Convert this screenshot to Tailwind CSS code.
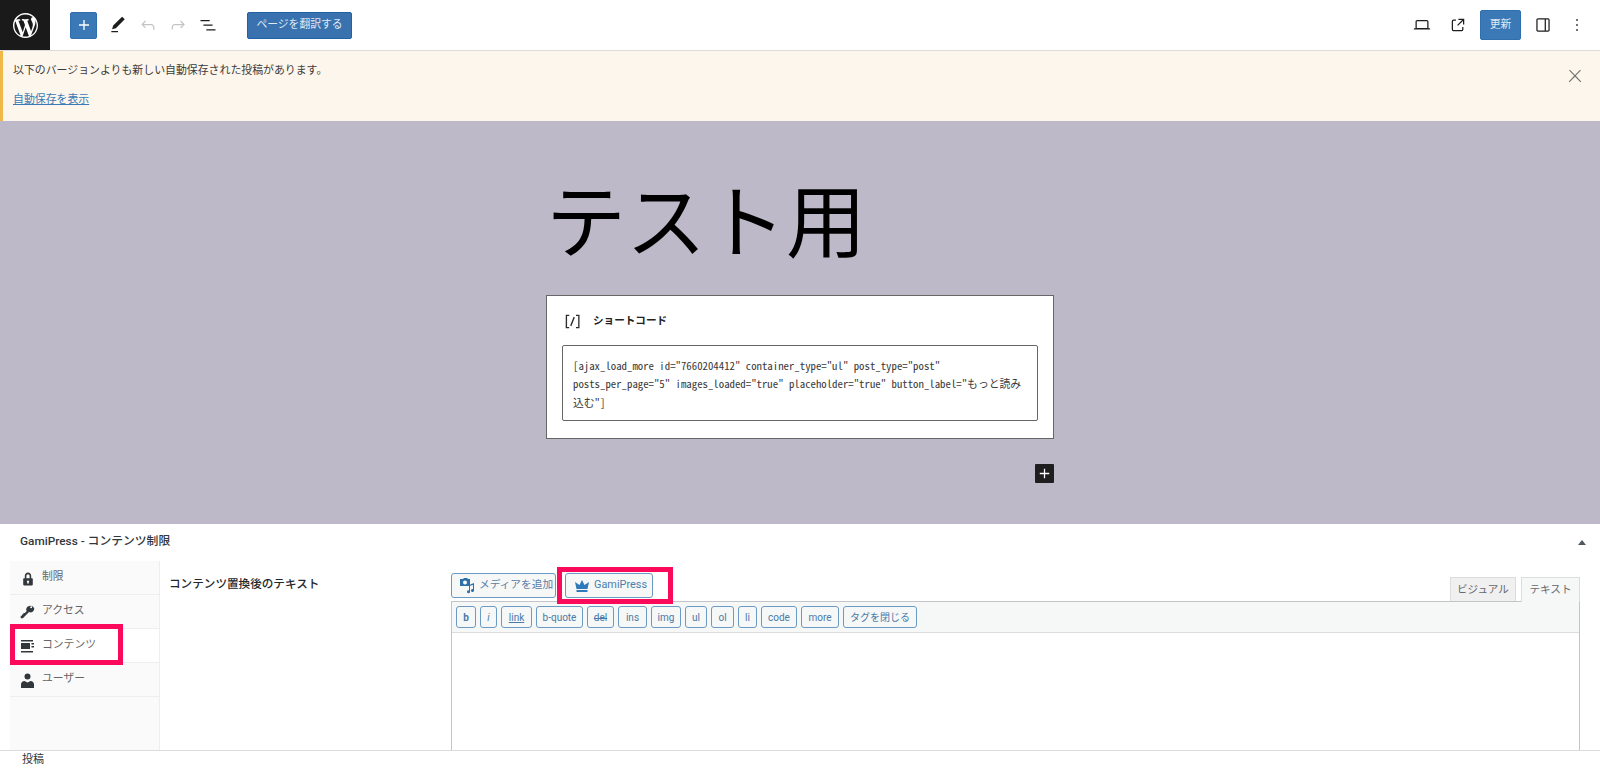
<!DOCTYPE html>
<html lang="ja">
<head>
    <meta charset="UTF-8">
    <title>テスト用</title>
    <script src="https://cdn.jsdelivr.net/npm/@tailwindcss/browser@4"></script>
</head>
<body class="bg-white">
<div class="relative w-[1600px] h-[771px] overflow-hidden flex flex-col font-['Roboto','Noto_Sans_CJK_JP',sans-serif] text-[#1e1e1e]">

    <!-- top bar -->
    <header class="h-[51px] shrink-0 flex items-center border-b border-[#dcdcdc] bg-white">
        <div class="w-[50px] h-[50px] bg-[#1a1a1a] flex items-center justify-center">
            <svg class="w-[25px] h-[25px] fill-white" viewBox="0 0 20 20"><path d="M20 10c0-5.51-4.49-10-10-10C4.48 0 0 4.49 0 10c0 5.52 4.48 10 10 10 5.51 0 10-4.48 10-10zM7.78 15.37L4.37 6.22c.55-.02 1.17-.08 1.17-.08.5-.06.44-1.13-.06-1.11 0 0-1.45.11-2.37.11-.18 0-.37 0-.58-.01C4.12 2.69 6.87 1.11 10 1.11c2.33 0 4.45.87 6.05 2.34-.68-.11-1.65.39-1.65 1.58 0 .74.45 1.36.9 2.1.35.61.55 1.36.55 2.46 0 1.49-1.4 5-1.4 5l-3.03-8.37c.54-.02.82-.17.82-.17.5-.05.44-1.25-.06-1.22 0 0-1.44.12-2.38.12-.87 0-2.33-.12-2.33-.12-.5-.03-.56 1.2-.06 1.22l.92.08 1.26 3.41zM17.41 10c.24-.64.74-1.87.43-4.25.7 1.29 1.05 2.71 1.05 4.25 0 3.29-1.73 6.24-4.4 7.78.97-2.59 1.94-5.2 2.92-7.78zM6.1 18.09C3.12 16.65 1.11 13.53 1.11 10c0-1.3.23-2.48.72-3.59C3.25 10.3 4.67 14.2 6.1 18.09zm4.03-6.63l2.58 6.98c-.86.29-1.76.45-2.71.45-.79 0-1.57-.11-2.29-.33.81-2.38 1.62-4.74 2.42-7.1z"/></svg>
        </div>
        <button class="ml-[20px] w-[27px] h-[27px] rounded-[2px] bg-[#3a78b6] border border-[#2f6fb0] flex items-center justify-center">
            <svg class="w-[20px] h-[20px] fill-white" viewBox="0 0 24 24"><path d="M18 11.2h-5.2V6h-1.6v5.2H6v1.6h5.2V18h1.6v-5.2H18z"/></svg>
        </button>
        <svg class="ml-[11px] w-[20px] h-[20px] fill-[#1e1e1e]" viewBox="0 0 24 24"><path d="M20.1 5.1L16.9 2 6.2 12.7l-1.3 4.4 4.5-1.3L20.1 5.1zM4 20.8h8v-1.5H4v1.5z"/></svg>
        <svg class="ml-[10px] w-[20px] h-[20px] fill-[#c4c4c4]" viewBox="0 0 24 24"><path d="M18.3 11.7c-.6-.6-1.4-.9-2.3-.9H6.7l2.9-3.3-1.1-1-4.5 5L8.5 16l1-1-2.7-2.7H16c.5 0 .9.2 1.3.5 1 1 1 3.4 1 4.5v.3h1.5v-.2c0-1.5 0-4.3-1.5-5.7z"/></svg>
        <svg class="ml-[10px] w-[20px] h-[20px] fill-[#c4c4c4]" viewBox="0 0 24 24"><path d="M15.6 6.5l-1.1 1 2.9 3.3H8c-.9 0-1.7.3-2.3.9-1.4 1.5-1.4 4.2-1.4 5.6v.2h1.5v-.3c0-1.1 0-3.5 1-4.5.3-.3.7-.5 1.3-.5h9.2L14.5 15l1.1 1.1 4.6-4.6-4.6-5z"/></svg>
        <svg class="ml-[10px] w-[20px] h-[20px] fill-[#1e1e1e]" viewBox="0 0 24 24"><path d="M3 6h11v1.5H3V6zm3.5 5.5h11V13h-11v-1.5zM10 17h11v1.5H10V17z"/></svg>
        <button class="ml-[29px] w-[105px] h-[27px] rounded-[2px] bg-[#3a72b0] border border-[#1f62a5] text-[#dfe9f3] text-[10.8px] leading-none">ページを翻訳する</button>
        <div class="ml-auto flex items-center">
            <svg class="w-[20px] h-[20px] fill-[#1e1e1e]" viewBox="0 0 24 24"><path d="M20.5 16h-.7V8c0-1.1-.9-2-2-2H6.2c-1.1 0-2 .9-2 2v8h-.7c-.8 0-1.5.7-1.5 1.5h20c0-.8-.7-1.500-1.500-1.500zM5.700 8c0-.3.2-.5.5-.5h11.600c.3 0 .5.2.5.5v7.600H5.700V8z"/></svg>
            <svg class="ml-[16px] w-[20px] h-[20px] fill-[#1e1e1e]" viewBox="0 0 24 24"><path d="M19.5 4.5h-7V6h4.44l-5.97 5.97 1.06 1.06L18 7.06v4.44h1.5v-7Zm-13 1a2 2 0 0 0-2 2v10a2 2 0 0 0 2 2h10a2 2 0 0 0 2-2v-3H17v3a.5.5 0 0 1-.5.5h-10a.5.5 0 0 1-.5-.5v-10a.5.5 0 0 1 .5-.5h3V5.500h-3Z"/></svg>
            <button class="ml-[12px] w-[41px] h-[30px] rounded-[2px] bg-[#3a78b6] border border-[#2f6fb0] text-[#dfe9f3] text-[10.8px] leading-none">更新</button>
            <svg class="ml-[12px] w-[20px] h-[20px] fill-[#1e1e1e]" viewBox="0 0 24 24"><path d="M18 4H6c-1.1 0-2 .9-2 2v12c0 1.100.9 2 2 2h12c1.100 0 2-.9 2-2V6c0-1.100-.9-2-2-2zM5.500 18V6c0-.3.2-.5.5-.5h8v13H6c-.3 0-.5-.2-.5-.5zm13 0c0 .3-.2.5-.5.5h-2.500v-13H18c.3 0 .5.2.5.5v12z"/></svg>
            <svg class="ml-[14px] mr-[13px] w-[20px] h-[20px] fill-[#1e1e1e]" viewBox="0 0 24 24"><path d="M13 19h-2v-2h2v2zm0-6h-2v-2h2v2zm0-6h-2V5h2v2z"/></svg>
        </div>
    </header>

    <!-- autosave notice -->
    <div class="h-[70px] shrink-0 flex justify-between bg-[#fdf6ec] border-l-[3px] border-[#f0b849] pl-[10px] pr-[15px]">
        <div class="text-[10.9px] text-[#3a3a3a]">
            <p class="mt-[13px] leading-[14px]">以下のバージョンよりも新しい自動保存された投稿があります。</p>
            <a class="block mt-[15px] leading-[14px] text-[#3a7ab5] underline">自動保存を表示</a>
        </div>
        <svg class="mt-[15px] w-[20px] h-[20px] fill-[#757575]" viewBox="0 0 24 24"><path d="M13 11.8l6.1-6.3-1-1-6.1 6.2-6.1-6.2-1 1 6.1 6.3-6.5 6.7 1 1 6.5-6.6 6.5 6.6 1-1z"/></svg>
    </div>

    <!-- canvas -->
    <main class="h-[403px] shrink-0 bg-[#bdb9c9] flex flex-col items-center">
        <div class="w-[508px]">
            <h1 class="mt-[57px] text-[80px] leading-[92px] font-normal text-black whitespace-nowrap">テスト用</h1>
            <div class="mt-[25px] h-[144px] bg-white border border-[#666] px-[15px] pt-[13px]">
                <div class="flex items-center h-[24px]">
                    <svg class="w-[21px] h-[21px] fill-[#2c2c2c]" viewBox="0 0 24 24"><path d="M16 4.2v1.5h2.5v12.5H16v1.5h4V4.2h-4zM4.2 19.8h4v-1.5H5.8V5.8h2.5V4.2h-4l-.1 15.6zm5.1-3.1l1.400.6 4-10-1.400-.6-4 10z"/></svg>
                    <span class="ml-[10px] text-[10.6px] font-bold text-[#222]">ショートコード</span>
                </div>
                <div class="mt-[12px] h-[76px] border border-[#666] rounded-[2px] pl-[10px] pr-[11px] py-[10px] text-[10.8px] leading-[18.4px] text-[#3a3a3a] font-['Noto_Sans_Mono_CJK_JP','Liberation_Mono',monospace] break-words">[ajax_load_more id="7660204412" container_type="ul" post_type="post" posts_per_page="5" images_loaded="true" placeholder="true" button_label="もっと読み込む"]</div>
            </div>
            <div class="mt-[25px] flex justify-end">
                <div class="w-[19px] h-[19px] bg-[#1e1e1e] rounded-[1px] flex items-center justify-center">
                    <svg class="w-[19px] h-[19px] fill-white" viewBox="0 0 24 24"><path d="M18 11.2h-5.2V6h-1.6v5.2H6v1.6h5.2V18h1.6v-5.2H18z"/></svg>
                </div>
            </div>
        </div>
    </main>

    <!-- GamiPress meta box -->
    <section class="h-[226px] shrink-0 bg-white flex flex-col">
        <div class="h-[36px] shrink-0 flex items-center justify-between pl-[20px] pr-[14px]">
            <span class="text-[11.8px] font-medium text-[#32373c]">GamiPress - コンテンツ制限</span>
            <span class="w-0 h-0 border-l-[4px] border-r-[4px] border-b-[5px] border-l-transparent border-r-transparent border-b-[#50575e]"></span>
        </div>
        <div class="mt-[1px] flex-1 min-h-0 flex pl-[10px]">
            <nav class="w-[150px] shrink-0 bg-[#fafafa] border-r border-[#eee] text-[10.8px] text-[#666]">
                <div class="h-[34px] border-b border-[#eee] flex items-center pl-[10px]">
                    <svg class="w-[16px] h-[16px] mt-[2px] fill-[#32373c]" viewBox="0 0 20 20"><path d="M14 9h1c.6 0 1 .4 1 1v7c0 .6-.4 1-1 1H5c-.6 0-1-.4-1-1v-7c0-.6.4-1 1-1h1V6c0-2.200 1.800-4 4-4s4 1.800 4 4v3zm-2 0V6c0-1.100-.9-2-2-2s-2 .9-2 2v3h4zm-2 3a1.500 1.500 0 0 0-.7 2.800V16h1.400v-1.200A1.500 1.500 0 0 0 10 12z"/></svg>
                    <span class="ml-[6px]">制限</span>
                </div>
                <div class="h-[34px] border-b border-[#eee] flex items-center pl-[9px]">
                    <svg class="w-[17px] h-[17px] fill-[#32373c]" viewBox="0 0 20 20"><path d="M18 6.500a4.500 4.500 0 0 1-6.200 4.200L4.500 18H2v-3l1.500-.1.100-1.500 1.500-.1.100-1.500 1.700-.1 2-2A4.500 4.500 0 1 1 18 6.500zM15.500 5a1.200 1.200 0 1 0-2.400 0 1.200 1.200 0 0 0 2.400 0z"/></svg>
                    <span class="ml-[6px]">アクセス</span>
                </div>
                <div class="h-[34px] border-b border-[#eee] bg-white flex items-center pl-[11px]">
                    <svg class="w-[13px] h-[14px] mt-[2px] fill-[#32373c]" viewBox="0 0 13 14"><path d="M0 0h12v1.500H0zM0 3h9v6H0zM10.500 3H13v1.500h-2.500zM10.500 6H13v1.500h-2.500zM0 11h12v1.500H0z"/></svg>
                    <span class="ml-[8px]">コンテンツ</span>
                </div>
                <div class="h-[34px] border-b border-[#eee] flex items-center pl-[11px]">
                    <svg class="w-[13px] h-[15px] mt-[2px] fill-[#32373c]" viewBox="0 0 13 15"><circle cx="6.500" cy="3.500" r="3"/><path d="M0 15v-3.500c0-2 1.500-3.500 3.500-3.500l3 1.500 3-1.500c2 0 3.500 1.500 3.500 3.500V15z"/></svg>
                    <span class="ml-[8px]">ユーザー</span>
                </div>
            </nav>
            <div class="w-[291px] shrink-0 pl-[9px] pt-[15px] text-[11.6px] font-medium text-[#23282d]">コンテンツ置換後のテキスト</div>
            <div class="w-[1129px] shrink-0 flex flex-col">
                <div class="h-[40px] shrink-0 flex justify-between">
                    <div class="flex pt-[12px] gap-[9px]">
                        <div class="w-[105px] h-[25px] rounded-[3px] border border-[#6b9ac4] bg-[#f6f7f7] flex items-center pl-[7px] text-[10.7px] text-[#5a7ea8] whitespace-nowrap">
                            <svg class="w-[16px] h-[16px] fill-[#2f6fa8]" viewBox="0 0 16 16"><path d="M1 1h3l1-1h3l1 1h2v7H1zM6 2.500a2 2 0 1 0 0 4 2 2 0 0 0 0-4zM15 5v7.500a1.500 1.500 0 1 1-1-1.400V7l-3 .8v6a1.500 1.500 0 1 1-1-1.400V7z"/></svg>
                            <span class="ml-[4px]">メディアを追加</span>
                        </div>
                        <div class="w-[88px] h-[25px] rounded-[3px] border border-[#6b9ac4] bg-[#f6f7f7] flex items-center pl-[8px] text-[10.9px] text-[#4a7fae]">
                            <svg class="w-[16px] h-[14px] fill-[#2f7ab8]" viewBox="0 0 16 14"><path d="M8 1l2.500 5L15 3l-1.500 7h-11L1 3l4.500 3zM2.500 11h11v2h-11z"/></svg>
                            <span class="ml-[4px]">GamiPress</span>
                        </div>
                    </div>
                    <div class="flex items-end gap-[5px] text-[10.6px] text-[#646970]">
                        <div class="w-[66px] h-[24px] bg-[#f0f0f1] border border-b-0 border-[#dcdcde] flex items-center justify-center">ビジュアル</div>
                        <div class="w-[59px] h-[25px] mb-[-1px] relative bg-[#f6f7f7] border border-b-0 border-[#dcdcde] flex items-center justify-center">テキスト</div>
                    </div>
                </div>
                <div class="flex-1 border border-b-0 border-[#c3c4c7] flex flex-col">
                    <div class="h-[31px] shrink-0 bg-[#f6f7f7] border-b border-[#dcdcde] flex items-center pl-[4px] gap-[4px] text-[10px] text-[#4a7aa8]">
                        <span class="w-[20px] h-[22px] flex items-center justify-center rounded-[3px] border border-[#6b9ac4] bg-[#f6f7f7] font-bold">b</span>
                        <span class="w-[17px] h-[22px] flex items-center justify-center rounded-[3px] border border-[#6b9ac4] bg-[#f6f7f7] italic">i</span>
                        <span class="w-[31px] h-[22px] flex items-center justify-center rounded-[3px] border border-[#6b9ac4] bg-[#f6f7f7] underline">link</span>
                        <span class="w-[47px] h-[22px] flex items-center justify-center rounded-[3px] border border-[#6b9ac4] bg-[#f6f7f7]">b-quote</span>
                        <span class="w-[27px] h-[22px] flex items-center justify-center rounded-[3px] border border-[#6b9ac4] bg-[#f6f7f7] line-through">del</span>
                        <span class="w-[29px] h-[22px] flex items-center justify-center rounded-[3px] border border-[#6b9ac4] bg-[#f6f7f7]">ins</span>
                        <span class="w-[30px] h-[22px] flex items-center justify-center rounded-[3px] border border-[#6b9ac4] bg-[#f6f7f7]">img</span>
                        <span class="w-[22px] h-[22px] flex items-center justify-center rounded-[3px] border border-[#6b9ac4] bg-[#f6f7f7]">ul</span>
                        <span class="w-[23px] h-[22px] flex items-center justify-center rounded-[3px] border border-[#6b9ac4] bg-[#f6f7f7]">ol</span>
                        <span class="w-[19px] h-[22px] flex items-center justify-center rounded-[3px] border border-[#6b9ac4] bg-[#f6f7f7]">li</span>
                        <span class="w-[36px] h-[22px] flex items-center justify-center rounded-[3px] border border-[#6b9ac4] bg-[#f6f7f7]">code</span>
                        <span class="w-[38px] h-[22px] flex items-center justify-center rounded-[3px] border border-[#6b9ac4] bg-[#f6f7f7]">more</span>
                        <span class="w-[74px] h-[22px] flex items-center justify-center rounded-[3px] border border-[#6b9ac4] bg-[#f6f7f7]">タグを閉じる</span>
                    </div>
                </div>
            </div>
        </div>
    </section>

    <footer class="h-[21px] shrink-0 bg-white border-t border-[#dcdcdc] pl-[22px] text-[11px] leading-[18px] text-[#333]">投稿</footer>

    <!-- annotation boxes drawn over the screenshot -->
    <div class="absolute left-[10px] top-[624px] w-[113px] h-[41px] border-[5px] border-[#fb0a5b]"></div>
    <div class="absolute left-[557px] top-[567px] w-[116px] h-[37px] border-[5px] border-[#fb0a5b]"></div>
</div>
</body>
</html>
